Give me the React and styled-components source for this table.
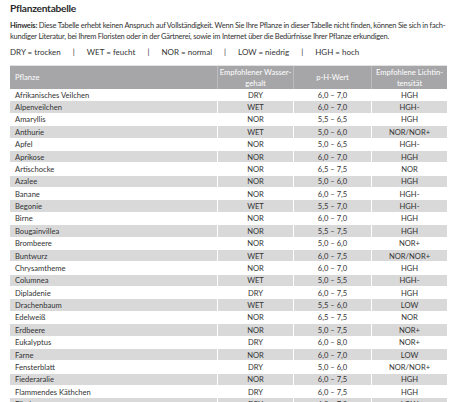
import styled, { createGlobalStyle } from "styled-components";

const GlobalStyle = createGlobalStyle`
  html, body {
    margin: 0;
    padding: 0;
    background: #ffffff;
  }
  body {
    font-family: Lato, "Liberation Sans", sans-serif;
    color: #333333;
  }
`;

const Page = styled.div`
  padding: 2px 13px 0 10px;
  width: 437px;
`;

const Title = styled.h1`
  margin: 0;
  font-size: 10.2px;
  line-height: 13px;
  font-weight: 700;
  letter-spacing: -0.25px;
  color: #2b2b2b;
`;

const Note = styled.p`
  margin: 5px 0 0;
  font-size: 7.5px;
  line-height: 11px;
  letter-spacing: -0.23px;
  color: #333333;
  white-space: nowrap;

  b {
    font-weight: 700;
  }
`;

const Legend = styled.div`
  display: flex;
  align-items: center;
  margin-top: 4px;
  height: 11px;
  font-size: 8px;
  color: #333333;
`;

const LegendItem = styled.span`
  white-space: nowrap;
`;

const Pipe = styled.span`
  margin: 0 ${(p) => p.$gap || 11}px;
`;

const Grid = styled.div`
  margin-top: 8px;
  width: 437px;
  font-size: 7.6px;
`;

const cols = "207px 76px 78px 76px";

const HeadRow = styled.div`
  display: grid;
  grid-template-columns: ${cols};
  height: 24px;
  background: #a6a6a8;
  border-top: 1px solid #e2e2e3;
  box-sizing: border-box;
`;

const HeadCell = styled.div`
  display: flex;
  align-items: center;
  justify-content: ${(p) => (p.$left ? "flex-start" : "center")};
  padding: 0 4px;
  color: #ffffff;
  line-height: 10.5px;
  text-align: center;
  white-space: nowrap;
  border-left: 1px solid ${(p) => (p.$left ? "transparent" : "#bdbdbf")};
`;

const Row = styled.div`
  display: grid;
  grid-template-columns: ${cols};
  height: 12.375px;
  background: ${(p) => (p.$shaded ? "#d9d9da" : "#ffffff")};
  border-bottom: 1px solid #ffffff;
  box-sizing: border-box;
`;

const Cell = styled.div`
  display: flex;
  align-items: center;
  justify-content: ${(p) => (p.$left ? "flex-start" : "center")};
  padding: 0 4px;
  color: #333333;
  white-space: nowrap;
  border-left: 1px solid ${(p) => (p.$left ? "transparent" : "#ffffff")};
`;

const rows = [
  ["Afrikanisches Veilchen", "DRY", "6,0 – 7,0", "HGH"],
  ["Alpenveilchen", "WET", "6,0 – 7,0", "HGH-"],
  ["Amaryllis", "NOR", "5,5 – 6,5", "HGH"],
  ["Anthurie", "WET", "5,0 – 6,0", "NOR/NOR+"],
  ["Apfel", "NOR", "5,0 – 6,5", "HGH-"],
  ["Aprikose", "NOR", "6,0 – 7,0", "HGH"],
  ["Artischocke", "NOR", "6,5 – 7,5", "NOR"],
  ["Azalee", "NOR", "5,0 – 6,0", "HGH"],
  ["Banane", "NOR", "6,0 – 7,5", "HGH-"],
  ["Begonie", "WET", "5,5 – 7,0", "HGH-"],
  ["Birne", "NOR", "6,0 – 7,0", "HGH"],
  ["Bougainvillea", "NOR", "5,5 – 7,5", "HGH"],
  ["Brombeere", "NOR", "5,0 – 6,0", "NOR+"],
  ["Buntwurz", "WET", "6,0 – 7,5", "NOR/NOR+"],
  ["Chrysamtheme", "NOR", "6,0 – 7,0", "HGH"],
  ["Columnea", "WET", "5,0 – 5,5", "HGH-"],
  ["Dipladenie", "DRY", "6,0 – 7,5", "HGH"],
  ["Drachenbaum", "WET", "5,5 – 6,0", "LOW"],
  ["Edelweiß", "NOR", "6,5 – 7,5", "NOR"],
  ["Erdbeere", "NOR", "5,0 – 7,5", "NOR+"],
  ["Eukalyptus", "DRY", "6,0 – 8,0", "NOR+"],
  ["Farne", "NOR", "6,0 – 7,0", "LOW"],
  ["Fensterblatt", "DRY", "5,0 – 6,0", "NOR/NOR+"],
  ["Fiederaralie", "NOR", "6,0 – 7,5", "HGH"],
  ["Flammendes Käthchen", "DRY", "6,0 – 7,5", "HGH"],
  ["Flieder", "DRY", "6,0 – 7,0", "LOW"],
];

export default function App() {
  return (
    <>
      <GlobalStyle />
      <Page>
        <Title>Pflanzentabelle</Title>
        <Note>
          <b>Hinweis:</b> Diese Tabelle erhebt keinen Anspruch auf
          Vollständigkeit. Wenn Sie Ihre Pflanze in dieser Tabelle nicht
          finden, können Sie sich in fach-
          <br />
          kundiger Literatur, bei Ihrem Floristen oder in der Gärtnerei, sowie
          im Internet über die Bedürfnisse Ihrer Pflanze erkundigen.
        </Note>
        <Legend>
          <LegendItem>DRY = trocken</LegendItem>
          <Pipe $gap={12}>|</Pipe>
          <LegendItem>WET = feucht</LegendItem>
          <Pipe $gap={12}>|</Pipe>
          <LegendItem>NOR = normal</LegendItem>
          <Pipe $gap={12}>|</Pipe>
          <LegendItem>LOW = niedrig</LegendItem>
          <Pipe $gap={12}>|</Pipe>
          <LegendItem>HGH = hoch</LegendItem>
        </Legend>
        <Grid>
          <HeadRow>
            <HeadCell $left>Pflanze</HeadCell>
            <HeadCell>
              Empfohlener Wasser-
              <br />
              gehalt
            </HeadCell>
            <HeadCell>p-H-Wert</HeadCell>
            <HeadCell>
              Empfohlene Lichtin-
              <br />
              tensität
            </HeadCell>
          </HeadRow>
          {rows.map((r, i) => (
            <Row key={r[0]} $shaded={i % 2 === 1}>
              <Cell $left>{r[0]}</Cell>
              <Cell>{r[1]}</Cell>
              <Cell>{r[2]}</Cell>
              <Cell>{r[3]}</Cell>
            </Row>
          ))}
        </Grid>
      </Page>
    </>
  );
}
